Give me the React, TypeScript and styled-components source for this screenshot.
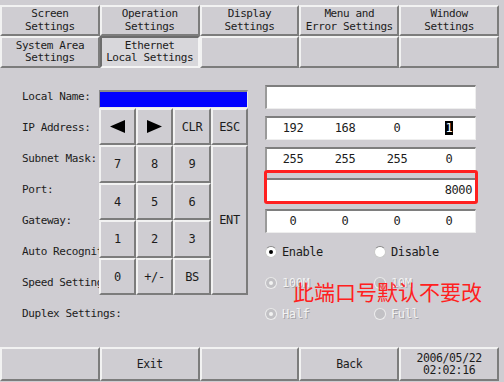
import styled, { createGlobalStyle } from "styled-components";

const GlobalStyle = createGlobalStyle`
    body {
        margin: 0;
        font-family: "DejaVu Sans Mono", "Liberation Mono", monospace;
    }
`

const tabs1 = [["Screen", "Settings"], ["Operation", "Settings"], ["Display", "Settings"], ["Menu and", "Error Settings"], ["Window", "Settings"]];
const tabs2 = [["System Area", "Settings"], ["Ethernet", "Local Settings"], [], [], []];

const LeftArrow = () => (
    <svg width="15" height="13" viewBox="0 0 15 13"><path d="M0 6.5 L15 0 L15 13 Z" fill="#000" /></svg>
);
const RightArrow = () => (
    <svg width="15" height="13" viewBox="0 0 15 13"><path d="M15 6.5 L0 0 L0 13 Z" fill="#000" /></svg>
);

const App = () => {
    return (
        <>
        <GlobalStyle />
        <Screen>
            <TabGrid>
                {tabs1.map((t, i) => (
                    <Tab key={"a" + i}>{t.map((l) => <div key={l}>{l}</div>)}</Tab>
                ))}
                {tabs2.map((t, i) => (
                    <Tab key={"b" + i} $active={i === 1}>{t.map((l) => <div key={l}>{l}</div>)}</Tab>
                ))}
            </TabGrid>
            <Main>
                <FormRow>
                    <Label>Local Name:</Label>
                    <Field />
                </FormRow>
                <FormRow>
                    <Label>IP Address:</Label>
                    <Field>
                        <Cell>192</Cell><Cell>168</Cell><Cell>0</Cell><Cell><Cursor>1</Cursor></Cell>
                    </Field>
                </FormRow>
                <FormRow>
                    <Label>Subnet Mask:</Label>
                    <Field>
                        <Cell>255</Cell><Cell>255</Cell><Cell>255</Cell><Cell>0</Cell>
                    </Field>
                </FormRow>
                <FormRow>
                    <Label>Port:</Label>
                    <PortField>8000</PortField>
                </FormRow>
                <FormRow>
                    <Label>Gateway:</Label>
                    <Field>
                        <Cell>0</Cell><Cell>0</Cell><Cell>0</Cell><Cell>0</Cell>
                    </Field>
                </FormRow>
                <FormRow>
                    <Label>Auto Recognition:</Label>
                    <Options>
                        <Option><Radio $checked /> Enable</Option>
                        <Option><Radio /> Disable</Option>
                    </Options>
                </FormRow>
                <FormRow>
                    <Label>Speed Settings:</Label>
                    <Options>
                        <Option $disabled><Radio $checked $disabled /> 100M</Option>
                        <Option $disabled><Radio $disabled /> 10M</Option>
                    </Options>
                </FormRow>
                <FormRow>
                    <Label>Duplex Settings:</Label>
                    <Options>
                        <Option $disabled><Radio $checked $disabled /> Half</Option>
                        <Option $disabled><Radio $disabled /> Full</Option>
                    </Options>
                </FormRow>

                <Keypad>
                    <Display />
                    <Keys>
                        <Key><LeftArrow /></Key>
                        <Key><RightArrow /></Key>
                        <Key>CLR</Key>
                        <Key>ESC</Key>
                        <Key>7</Key><Key>8</Key><Key>9</Key>
                        <EnterKey>ENT</EnterKey>
                        <Key>4</Key><Key>5</Key><Key>6</Key>
                        <Key>1</Key><Key>2</Key><Key>3</Key>
                        <Key>0</Key><Key>+/-</Key><Key>BS</Key>
                    </Keys>
                </Keypad>

                <Note>此端口号默认不要改</Note>
            </Main>
            <BottomBar>
                <Tab />
                <Tab>Exit</Tab>
                <Tab />
                <Tab>Back</Tab>
                <Tab><div>2006/05/22</div><div>02:02:16</div></Tab>
            </BottomBar>
        </Screen>
        </>
    )
}

export default App;

const Screen = styled.div`
    width: 504px;
    height: 382px;
    background-color: #cfcdd2;
    color: #1c1c1c;
    font-size: 11px;
    letter-spacing: -0.4px;
    display: flex;
    flex-direction: column;
    overflow: hidden;
`

const TabGrid = styled.div`
    display: grid;
    grid-template-columns: repeat(5, 1fr);
    grid-template-rows: 31px 32px;
    width: 499px;
    margin-top: 5px;
`

const Tab = styled.div<{ $active?: boolean }>`
    box-sizing: border-box;
    display: flex;
    flex-direction: column;
    justify-content: center;
    align-items: center;
    line-height: 12.5px;
    background-color: ${(p) => (p.$active ? "#d8d7db" : "#cfcdd2")};
    border-top: 2px solid ${(p) => (p.$active ? "#6c6c6c" : "#f2f2f2")};
    border-left: 2px solid ${(p) => (p.$active ? "#6c6c6c" : "#f2f2f2")};
    border-bottom: 2px solid ${(p) => (p.$active ? "#f4f4f4" : "#7c7c7c")};
    border-right: 2px solid ${(p) => (p.$active ? "#f4f4f4" : "#7c7c7c")};
`

const Main = styled.div`
    flex: 1;
    position: relative;
    padding-top: 13px;
`

const FormRow = styled.div`
    display: grid;
    grid-template-columns: 265px 211px;
    height: 31px;
    align-items: center;
`

const Label = styled.div`
    padding-left: 22px;
    white-space: nowrap;
    overflow: hidden;
`

const Field = styled.div`
    box-sizing: border-box;
    height: 24px;
    background: #ffffff;
    border-top: 2px solid #7e7e7e;
    border-left: 2px solid #9a9a9a;
    border-bottom: 1px solid #eeeeee;
    border-right: 1px solid #eeeeee;
    display: grid;
    grid-template-columns: repeat(4, 1fr);
    align-items: center;
    font-size: 12px;
`

const Cell = styled.div`
    text-align: center;
`

const Cursor = styled.span`
    background: #000;
    color: #fff;
    padding: 0 1px;
`

const PortField = styled(Field)`
    position: relative;
    display: block;
    line-height: 21px;
    text-align: right;
    padding-right: 3px;

    &::after {
        content: "";
        position: absolute;
        left: -3px;
        right: -3px;
        top: -10px;
        bottom: -3px;
        border: 3px solid #ff2020;
        border-radius: 3px;
    }
`

const Options = styled.div`
    display: grid;
    grid-template-columns: 109px 100px;
    font-size: 12px;
`

const Option = styled.div<{ $disabled?: boolean }>`
    display: flex;
    align-items: center;
    gap: 5px;
    color: ${(p) => (p.$disabled ? "#f2f2f2" : "#1c1c1c")};
    text-shadow: ${(p) => (p.$disabled ? "1px 1px 0 #a4a3a8" : "none")};
`

const Radio = styled.span<{ $checked?: boolean; $disabled?: boolean }>`
    box-sizing: border-box;
    width: 12px;
    height: 12px;
    border-radius: 50%;
    background: ${(p) => (p.$disabled ? "#c2c1c5" : "#ffffff")};
    border: 1px solid ${(p) => (p.$disabled ? "#eeeeee" : "#c8c8c8")};
    border-top-color: ${(p) => (p.$disabled ? "#e8e8e8" : "#8a8a8a")};
    display: flex;
    align-items: center;
    justify-content: center;

    &::after {
        content: "";
        width: 4px;
        height: 4px;
        border-radius: 50%;
        background: ${(p) => (p.$disabled ? "#f2f2f2" : "#000")};
        display: ${(p) => (p.$checked ? "block" : "none")};
    }
`

const Keypad = styled.div`
    position: absolute;
    left: 99px;
    top: 22px;
    width: 149px;
`

const Display = styled.div`
    box-sizing: border-box;
    height: 18px;
    background: #0000ff;
    border-top: 2px solid #8a8a8a;
    border-left: 1px solid #8a8a8a;
    border-bottom: 1px solid #e8e8e8;
    border-right: 1px solid #e8e8e8;
`

const Keys = styled.div`
    display: grid;
    grid-template-columns: 37px 37px 38px 37px;
    grid-template-rows: 37px 38px 37px 38px 37px;
    font-size: 12px;
`

const Key = styled.div`
    box-sizing: border-box;
    display: flex;
    align-items: center;
    justify-content: center;
    background: #cfcdd2;
    border-top: 2px solid #f2f2f2;
    border-left: 2px solid #f2f2f2;
    border-bottom: 2px solid #7c7c7c;
    border-right: 2px solid #7c7c7c;
`

const EnterKey = styled(Key)`
    grid-column: 4;
    grid-row: 2 / span 4;
`

const Note = styled.div`
    position: absolute;
    left: 293px;
    top: 211px;
    font-family: "Noto Sans CJK SC", sans-serif;
    font-size: 21px;
    line-height: 24px;
    letter-spacing: 0;
    color: #ff2020;
`

const BottomBar = styled.div`
    display: grid;
    grid-template-columns: repeat(5, 1fr);
    width: 499px;
    height: 34px;
    margin-bottom: 1px;
    line-height: 12px;
    font-size: 11.5px;
`
